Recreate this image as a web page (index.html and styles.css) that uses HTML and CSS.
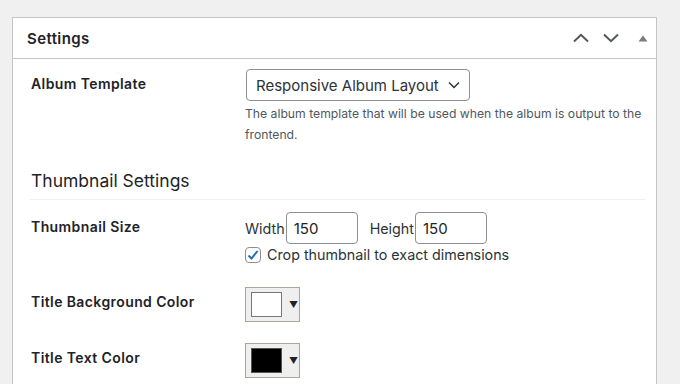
FILE: index.html
```html
<!DOCTYPE html>
<html lang="en">
<head>
  <meta charset="UTF-8" />
  <meta name="viewport" content="width=device-width, initial-scale=1.0" />
  <title>Album Settings</title>
  <link rel="stylesheet" href="styles.css">
</head>
<body>
  <div class="postbox">
    <div class="postbox-header">
      <h2 class="postbox-title">Settings</h2>
      <div class="handle-actions">
        <button class="handle-btn" aria-label="Move up">
          <svg width="16" height="10" viewBox="0 0 16 10"><path d="M1 8.5 L8 1.8 L15 8.5" fill="none" stroke="#50575e" stroke-width="2"/></svg>
        </button>
        <button class="handle-btn" aria-label="Move down">
          <svg width="16" height="10" viewBox="0 0 16 10"><path d="M1 1.5 L8 8.2 L15 1.5" fill="none" stroke="#50575e" stroke-width="2"/></svg>
        </button>
        <button class="handle-btn toggle" aria-label="Toggle panel">
          <svg width="10" height="7" viewBox="0 0 10 7"><path d="M5 0.5 L9.5 6.5 L0.5 6.5 Z" fill="#787c82"/></svg>
        </button>
      </div>
    </div>

    <div class="inside">
      <div class="field-row first">
        <label class="field-label">Album Template</label>
        <div class="field-control">
          <div class="select">
            <span>Responsive Album Layout</span>
            <svg width="12" height="8" viewBox="0 0 12 8"><path d="M1 1.5 L6 6.5 L11 1.5" fill="none" stroke="#2c3338" stroke-width="1.5"/></svg>
          </div>
          <p class="description">The album template that will be used when the album is output to the frontend.</p>
        </div>
      </div>

      <h3 class="section-title">Thumbnail Settings</h3>

      <div class="field-row">
        <label class="field-label">Thumbnail Size</label>
        <div class="field-control">
          <div class="size-inputs">
            <span>Width</span><input type="text" class="small-text" value="150">
            <span class="second">Height</span><input type="text" class="small-text" value="150">
          </div>
          <label class="check">
            <span class="checkbox">
              <svg width="14" height="14" viewBox="0 0 14 14"><path d="M2.5 7.5 L5.5 10.5 L11.5 3" fill="none" stroke="#2271b1" stroke-width="2"/></svg>
            </span>
            Crop thumbnail to exact dimensions
          </label>
        </div>
      </div>

      <div class="field-row color-row">
        <label class="field-label">Title Background Color</label>
        <div class="field-control">
          <div class="color-btn"><span class="swatch white"></span><span class="arrow">▼</span></div>
        </div>
      </div>

      <div class="field-row color-row last">
        <label class="field-label">Title Text Color</label>
        <div class="field-control">
          <div class="color-btn"><span class="swatch black"></span><span class="arrow">▼</span></div>
        </div>
      </div>
    </div>
  </div>
</body>
</html>
```

FILE: styles.css
```css
:root {
  --text: #1d2327;
  --text-secondary: #50575e;
  --border: #c3c4c7;
}

* {
  margin: 0;
  padding: 0;
  box-sizing: border-box;
}

html,
body {
  height: 100%;
  overflow: hidden;
}

body {
  background: #f0f0f1;
  color: var(--text);
  font-family: Inter, "Noto Sans", sans-serif;
  font-size: 14px;
  padding: 17px 23px 0 12px;
}

.postbox {
  background: #fff;
  border: 1px solid var(--border);
  border-bottom: none;
  height: 100%;
}

.postbox-header {
  display: flex;
  align-items: center;
  justify-content: space-between;
  height: 41px;
  border-bottom: 1px solid var(--border);
  padding: 0 0 0 14px;
}

.postbox-title {
  font-size: 15px;
  font-weight: 600;
  letter-spacing: 0.4px;
  line-height: 1;
}

.handle-actions {
  display: flex;
  align-items: center;
}

.handle-btn {
  background: none;
  border: none;
  width: 30px;
  height: 36px;
  display: flex;
  align-items: center;
  justify-content: center;
}

.handle-btn.toggle {
  width: 26px;
  margin-left: 4px;
}

.inside {
  padding: 0 11px 0 17px;
}

.field-row {
  display: flex;
  padding-top: 12px;
}

.field-row.first {
  padding-top: 10px;
}

.field-label {
  width: 215px;
  flex-shrink: 0;
  padding-left: 1px;
  font-weight: 600;
  letter-spacing: 0.4px;
  line-height: 30px;
}

.field-control {
  flex: 1;
}

.select {
  display: inline-flex;
  align-items: center;
  gap: 9px;
  height: 32px;
  margin-left: 1px;
  padding: 0 9px 0 9px;
  border: 1px solid #8c8f94;
  border-radius: 4px;
  font-size: 15px;
  color: #2c3338;
}

.description {
  margin-top: 2px;
  font-size: 12.2px;
  line-height: 21px;
  color: var(--text-secondary);
}

.section-title {
  margin-top: 24px;
  padding: 0 0 6px 1px;
  font-size: 17.5px;
  font-weight: 400;
  line-height: 24px;
  border-bottom: 1px solid #f0f0f1;
}

.size-inputs {
  display: flex;
  align-items: center;
  font-size: 14.3px;
  color: #2c3338;
}

.size-inputs .second {
  margin-left: 12px;
}

.small-text {
  width: 72px;
  height: 32px;
  margin-left: 1px;
  padding: 0 7px;
  border: 1px solid #8c8f94;
  border-radius: 4px;
  font-family: inherit;
  font-size: 15px;
  color: var(--text);
}

.check {
  display: flex;
  align-items: center;
  gap: 6px;
  margin-top: 3px;
  font-size: 14.3px;
  line-height: 16px;
  color: #2c3338;
}

.checkbox {
  width: 16px;
  height: 16px;
  border: 1px solid #8c8f94;
  border-radius: 4px;
  display: flex;
  align-items: center;
  justify-content: center;
}

.color-row {
  padding-top: 24px;
}

.color-row.last {
  padding-top: 21px;
}

.color-btn {
  display: flex;
  align-items: center;
  width: 55px;
  height: 35px;
  padding-left: 5px;
  background: #efefef;
  border: 1px solid #b0a39b;
}

.swatch {
  width: 31px;
  height: 25px;
  border: 1px solid #777;
}

.swatch.white {
  background: #fff;
}

.swatch.black {
  background: #000;
  border-color: #555;
}

.arrow {
  margin-left: 7px;
  font-size: 9px;
  color: #222;
}
```
